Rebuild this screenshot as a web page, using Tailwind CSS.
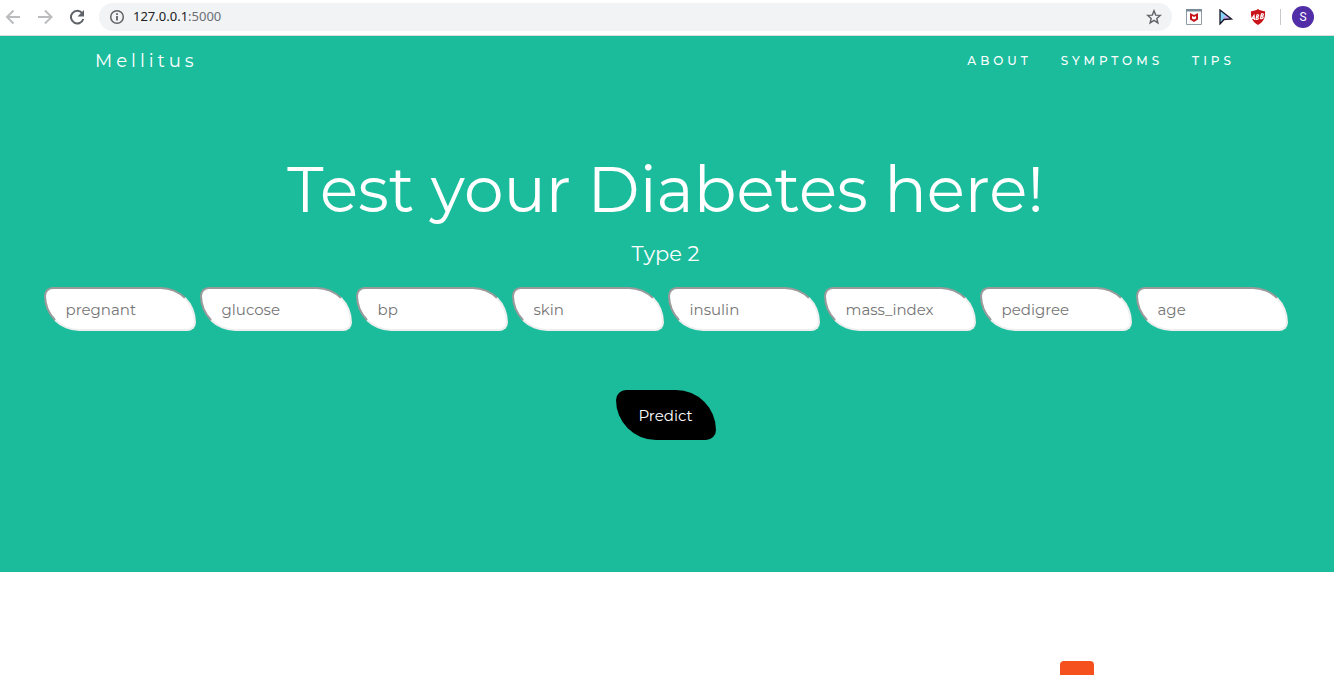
<!DOCTYPE html>
<html lang="en">
<head>
<meta charset="utf-8">
<title>Mellitus</title>
<meta name="viewport" content="width=device-width, initial-scale=1">
<script src="https://cdn.jsdelivr.net/npm/@tailwindcss/browser@4"></script>
</head>
<body class="flex h-screen flex-col overflow-hidden bg-white font-['Montserrat','Inter',sans-serif] text-white">
<header class="flex h-9 shrink-0 items-center border-b border-[#dadce0] pr-5 pb-px font-['Noto_Sans','Open_Sans',sans-serif]">
  <div class="flex w-[99px] items-center gap-4 pl-[5px]">
    <button aria-label="Back" class="size-4"><svg viewBox="0 0 16 16" class="size-4" fill="none" stroke="#babcbe" stroke-width="2"><path d="M15 8H3M8.500 1.500 2 8l6.500 6.500"/></svg></button>
    <button aria-label="Forward" class="size-4"><svg viewBox="0 0 16 16" class="size-4" fill="none" stroke="#babcbe" stroke-width="2"><path d="M1 8h13M8 1.500 14.500 8 8 14.500"/></svg></button>
    <button aria-label="Reload" class="size-4"><svg viewBox="0 0 16 16" class="size-4"><path d="M13.200 4.200A6.300 6.300 0 1 0 14.300 10" fill="none" stroke="#5f6368" stroke-width="2"/><path d="M15 1v6.500H8.500z" fill="#5f6368"/></svg></button>
  </div>
  <div class="flex h-7 flex-1 items-center rounded-full bg-[#f1f3f4] px-2.5">
    <svg viewBox="0 0 16 16" class="size-4" fill="none" stroke="#5f6368" stroke-width="1.500"><circle cx="8" cy="8" r="6.300"/><path d="M8 7v4.500M8 4.300v1.700" stroke-width="1.800"/></svg>
    <div class="ml-2 flex-1 text-[13px] text-[#202124]">127.0.0.1<span class="text-[#6b6f74]">:5000</span></div>
    <button aria-label="Bookmark this page" class="size-4"><svg viewBox="0 0 16 16" class="size-4" fill="none" stroke="#5f6368" stroke-width="1.400"><path d="m8 1.800 1.700 4.300 4.600.3-3.500 3 1.100 4.500L8 11.400l-3.900 2.500 1.100-4.500-3.500-3 4.600-.3z"/></svg></button>
  </div>
  <div class="flex items-center gap-4 pl-3.5">
    <svg viewBox="0 0 16 16" class="size-4"><path d="M.5 1h15v14.500H.5z" fill="#fff" stroke="#8f9ba5"/><path d="M0 0h16v2.500H0z" fill="#778b99"/><path d="m4 4 4 2 4-2v6.500L8 13l-4-2.500z" fill="#c4151c"/><path d="m6 7 2 1 2-1v2.500l-2 1-2-1z" fill="#fff"/></svg>
    <svg viewBox="0 0 16 16" class="size-4"><path d="M2 1v14l4-4.500 7-.5z" fill="#84d2f5"/><path d="m7 7-5 8 4-4.500 7-.5-4-3.500z" fill="#c9a4ee"/><path d="M2 1v14l4-4.500 7.500-.5z" fill="none" stroke="#161625" stroke-width="1.300"/></svg>
    <svg viewBox="0 0 16 16" class="size-4"><path d="M8 0c2 1.500 4.500 2 7 2.300.5 6.700-1.500 10.700-7 13.700C2.500 13 .5 9 1 2.300 3.500 2 6 1.500 8 0z" fill="#c9141b"/><path d="m.500 11.500 3.500-5 .5 4.500M2.500 9.500l2-.3M7 5.500l-1 5c3 .3 3-2.500.5-2.500 2.500 0 3-2.500.5-2.500M11.500 4.500l-1 5c3.500.3 3.500-2.500.5-2.500 3 0 3.500-2.500.5-2.500" fill="none" stroke="#fff" stroke-width="1.200"/></svg>
    <div class="-ml-0.5 h-4 w-px bg-[#c6c8ca]"></div>
    <button aria-label="Profile" class="-ml-[5px] size-[22px] rounded-full bg-[#512da8] font-['Roboto',sans-serif] text-xs">S</button>
  </div>
</header>
<main class="h-[536px] shrink-0 bg-[#1abc9c]">
  <nav class="flex h-[50px] items-center justify-between pr-[99px] pl-[95px]">
    <a href="#" class="text-lg tracking-[4px]">Mellitus</a>
    <div class="flex gap-[29px] text-xs font-medium tracking-[4px]">
      <a href="#about">ABOUT</a>
      <a href="#symptoms">SYMPTOMS</a>
      <a href="#tips">TIPS</a>
    </div>
  </nav>
  <h1 class="mt-16 pr-[3px] text-center text-[63px] leading-20">Test your Diabetes here!</h1>
  <h3 class="mt-2.5 pr-[3px] text-center text-[21px] leading-7">Type 2</h3>
  <form class="mt-[19px] flex flex-col items-center pr-[3px]">
    <div class="flex flex-wrap justify-center gap-1 text-[15px]">
      <input aria-label="pregnant" placeholder="pregnant" class="h-11 w-[152px] rounded-[10px_40px] border-2 border-t-[#9a9a9a] border-r-[#eee] border-b-[#eee] border-l-[#9a9a9a] bg-white px-5 placeholder:text-[#757575]">
      <input aria-label="glucose" placeholder="glucose" class="h-11 w-[152px] rounded-[10px_40px] border-2 border-t-[#9a9a9a] border-r-[#eee] border-b-[#eee] border-l-[#9a9a9a] bg-white px-5 placeholder:text-[#757575]">
      <input aria-label="bp" placeholder="bp" class="h-11 w-[152px] rounded-[10px_40px] border-2 border-t-[#9a9a9a] border-r-[#eee] border-b-[#eee] border-l-[#9a9a9a] bg-white px-5 placeholder:text-[#757575]">
      <input aria-label="skin" placeholder="skin" class="h-11 w-[152px] rounded-[10px_40px] border-2 border-t-[#9a9a9a] border-r-[#eee] border-b-[#eee] border-l-[#9a9a9a] bg-white px-5 placeholder:text-[#757575]">
      <input aria-label="insulin" placeholder="insulin" class="h-11 w-[152px] rounded-[10px_40px] border-2 border-t-[#9a9a9a] border-r-[#eee] border-b-[#eee] border-l-[#9a9a9a] bg-white px-5 placeholder:text-[#757575]">
      <input aria-label="mass_index" placeholder="mass_index" class="h-11 w-[152px] rounded-[10px_40px] border-2 border-t-[#9a9a9a] border-r-[#eee] border-b-[#eee] border-l-[#9a9a9a] bg-white px-5 placeholder:text-[#757575]">
      <input aria-label="pedigree" placeholder="pedigree" class="h-11 w-[152px] rounded-[10px_40px] border-2 border-t-[#9a9a9a] border-r-[#eee] border-b-[#eee] border-l-[#9a9a9a] bg-white px-5 placeholder:text-[#757575]">
      <input aria-label="age" placeholder="age" class="h-11 w-[152px] rounded-[10px_40px] border-2 border-t-[#9a9a9a] border-r-[#eee] border-b-[#eee] border-l-[#9a9a9a] bg-white px-5 placeholder:text-[#757575]">
    </div>
    <button type="submit" class="mt-[59px] h-[50px] w-[100px] rounded-[10px_40px] bg-black pt-0.5 text-[15px]">Predict</button>
  </form>
</main>
<section class="flex justify-end pt-[89px] pr-60">
  <div class="h-10 w-[34px] rounded-sm bg-[#f4511e]"></div>
</section>
</body>
</html>
